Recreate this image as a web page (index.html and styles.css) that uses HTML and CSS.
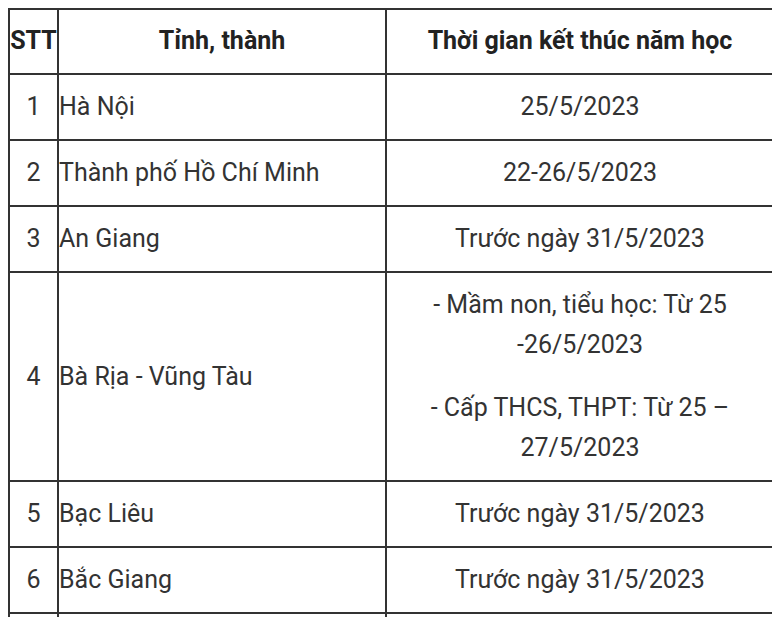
FILE: index.html
```html
<!DOCTYPE html>
<html lang="vi">
<head>
<meta charset="utf-8">
<link rel="stylesheet" href="styles.css">
</head>
<body>
<table class="schedule">
  <colgroup>
    <col class="col-stt">
    <col class="col-prov">
    <col class="col-time">
  </colgroup>
  <thead>
    <tr>
      <th>STT</th>
      <th>Tỉnh, thành</th>
      <th>Thời gian kết thúc năm học</th>
    </tr>
  </thead>
  <tbody>
    <tr>
      <td class="num">1</td>
      <td class="prov">Hà Nội</td>
      <td class="time">25/5/2023</td>
    </tr>
    <tr>
      <td class="num">2</td>
      <td class="prov">Thành phố Hồ Chí Minh</td>
      <td class="time">22-26/5/2023</td>
    </tr>
    <tr>
      <td class="num">3</td>
      <td class="prov">An Giang</td>
      <td class="time">Trước ngày 31/5/2023</td>
    </tr>
    <tr>
      <td class="num">4</td>
      <td class="prov">Bà Rịa - Vũng Tàu</td>
      <td class="time">
        <p>- Mầm non, tiểu học: Từ 25 -26/5/2023</p>
        <p>- Cấp THCS, THPT: Từ 25 – 27/5/2023</p>
      </td>
    </tr>
    <tr>
      <td class="num">5</td>
      <td class="prov">Bạc Liêu</td>
      <td class="time">Trước ngày 31/5/2023</td>
    </tr>
    <tr>
      <td class="num">6</td>
      <td class="prov">Bắc Giang</td>
      <td class="time">Trước ngày 31/5/2023</td>
    </tr>
    <tr class="next">
      <td></td>
      <td></td>
      <td></td>
    </tr>
  </tbody>
</table>
</body>
</html>
```
FILE: styles.css
```css
html, body {
  background: #fff;
}
body {
  margin: 8px;
  font-family: Roboto, "Liberation Sans", sans-serif;
  color: #333;
  font-size: 25px;
  line-height: 40px;
}
.schedule {
  border-collapse: collapse;
  table-layout: fixed;
  width: 765px;
}
.col-stt { width: 49px; }
.col-prov { width: 328px; }
.col-time { width: 388px; }
.schedule th,
.schedule td {
  border: 2px solid #333;
  padding: 12px 0;
  vertical-align: middle;
}
.schedule th {
  font-weight: 700;
  color: #222;
  text-align: center;
  padding: 11px 0 12px;
}
.num { text-align: center; }
.prov { text-align: left; padding-left: 1px; }
.time { text-align: center; }
.time p { margin: 0; }
.time p + p { margin-top: 23px; }
.next td { height: 40px; }
```
